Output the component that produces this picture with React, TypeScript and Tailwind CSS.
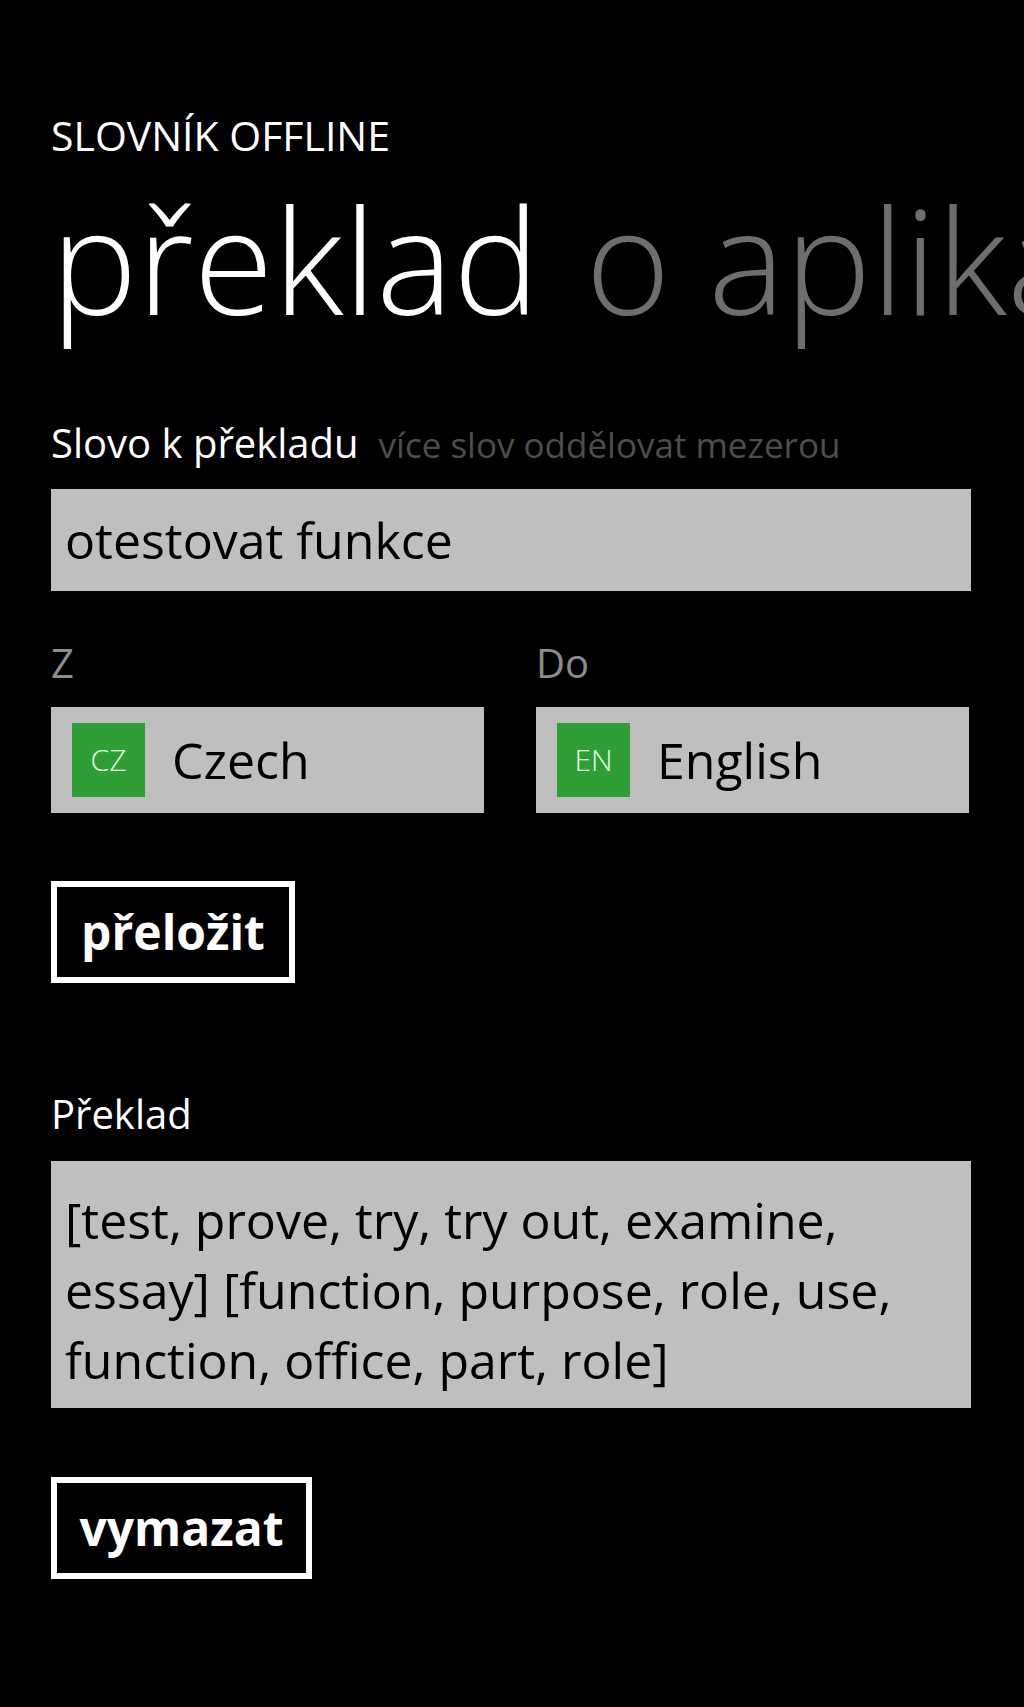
import React from 'react'

const font = { fontFamily: '"Open Sans", "Noto Sans", sans-serif' }

function LangPicker({ code, name }: { code: string; name: string }) {
  return (
    <div className="flex h-[106px] w-[433px] items-center gap-[27px] bg-[#bfbfbf] pl-[21px]">
      <div className="flex h-[74px] w-[73px] items-center justify-center bg-[#2f9e37] text-[30px] font-light leading-none text-[#e6ffe6]">
        {code}
      </div>
      <span className="text-[50px] leading-none text-black">{name}</span>
    </div>
  )
}

function OutlineButton({ label, width }: { label: string; width: string }) {
  return (
    <button
      className={`flex h-[102px] items-center justify-center border-[6px] border-white bg-black text-[48px] font-bold leading-none text-white ${width}`}
    >
      {label}
    </button>
  )
}

export default function App() {
  return (
    <div className="min-h-[1707px] w-full overflow-hidden bg-black text-white" style={font}>
      <div className="pl-[51px]">
        {/* Title */}
        <div className="pt-[115px] text-[41px] leading-none">SLOVNÍK OFFLINE</div>
        <div className="mt-[30px] flex gap-[46px] whitespace-nowrap text-[145px] font-light leading-none">
          <span>překlad</span>
          <span className="text-[#6e6e6e]">o aplikaci</span>
        </div>

        {/* Word input */}
        <div className="mt-[92px] flex items-baseline gap-[20px] whitespace-nowrap">
          <span className="text-[40px] leading-none">Slovo k překladu</span>
          <span className="text-[35px] leading-none text-[#4d4d4d]">více slov oddělovat mezerou</span>
        </div>
        <div className="mt-[26px] flex h-[102px] w-[920px] items-center bg-[#bfbfbf] pl-[14px]">
          <span className="text-[50px] leading-none text-black">otestovat funkce</span>
        </div>

        {/* Languages */}
        <div className="mt-[52px] flex gap-[52px]">
          <div className="flex flex-col">
            <span className="text-[40px] leading-none text-[#8c8c8c]">Z</span>
            <div className="mt-[24px]">
              <LangPicker code="CZ" name="Czech" />
            </div>
          </div>
          <div className="flex flex-col">
            <span className="text-[40px] leading-none text-[#8c8c8c]">Do</span>
            <div className="mt-[24px]">
              <LangPicker code="EN" name="English" />
            </div>
          </div>
        </div>

        <div className="mt-[68px]">
          <OutlineButton label="přeložit" width="w-[244px]" />
        </div>

        {/* Result */}
        <div className="mt-[111px] text-[40px] leading-none">Překlad</div>
        <div className="mt-[27px] h-[247px] w-[920px] bg-[#bfbfbf] pl-[14px] pr-[6px] pt-[24px] text-[50px] leading-[70px] text-black">
          [test, prove, try, try out, examine, essay] [function, purpose, role, use, function, office, part, role]
        </div>

        <div className="mt-[69px]">
          <OutlineButton label="vymazat" width="w-[261px]" />
        </div>
      </div>
    </div>
  )
}
